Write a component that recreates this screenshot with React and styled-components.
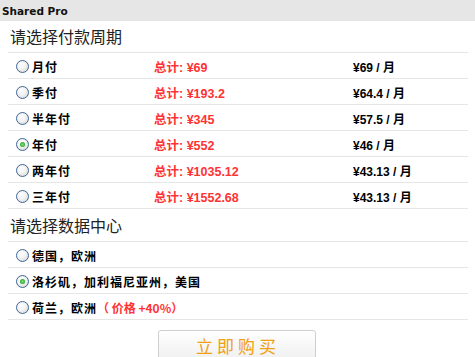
import React, { useState } from "react";
import styled, { createGlobalStyle } from "styled-components";

const Global = createGlobalStyle`
  html, body { margin: 0; padding: 0; background: #fff; }
  body { font-family: "Liberation Sans", Arial, "Noto Sans CJK SC", sans-serif; }
`;

const Header = styled.div`
  height: 21px;
  background: #e6e6e6;
  display: flex;
  align-items: center;
  padding-left: 2px;
  font-family: "DejaVu Sans", Verdana, sans-serif;
  font-weight: bold;
  font-size: 10.5px;
  color: #111;
`;

const Body = styled.div`
  padding: 0 7px 0 8px;
`;

const SectionTitle = styled.div`
  height: ${(p) => p.$h}px;
  line-height: ${(p) => p.$h}px;
  padding-left: 2px;
  font-family: "Noto Sans CJK SC", sans-serif;
  font-size: 16px;
  color: #222;
  border-bottom: 1px solid #e6e6e6;
`;

const Row = styled.label`
  display: grid;
  grid-template-columns: 138px 199px 1fr;
  align-items: center;
  padding-left: 8px;
  padding-top: 2px;
  box-sizing: border-box;
  height: 26px;
  border-bottom: 1px solid #e6e6e6;
  cursor: pointer;
`;

const LabelCell = styled.span`
  display: flex;
  align-items: center;
  gap: 3px;
  grid-column: ${(p) => (p.$wide ? "1 / -1" : "auto")};
`;

const Radio = styled.input.attrs({ type: "radio" })`
  appearance: none;
  -webkit-appearance: none;
  margin: 0;
  width: 13px;
  height: 13px;
  border-radius: 50%;
  border: 1px solid #3d6697;
  box-sizing: border-box;
  background: radial-gradient(circle at 40% 35%, #ffffff 0%, #f2f2f2 45%, #cfcfcf 100%);
  position: relative;
  flex: none;
  &:checked::after {
    content: "";
    position: absolute;
    left: 3px;
    top: 3px;
    width: 5px;
    height: 5px;
    border-radius: 50%;
    background: radial-gradient(circle, #7fe07f 0%, #2fa82f 70%, #1f7a1f 100%);
  }
`;

const Name = styled.span`
  font-family: "Noto Sans CJK SC", sans-serif;
  font-weight: bold;
  font-size: 12px;
  letter-spacing: 1px;
  color: #000;
`;

const Extra = styled.span`
  font-family: "Noto Sans CJK SC", sans-serif;
  font-weight: bold;
  font-size: 12px;
  color: #ff3333;
  margin-left: -3px;
`;

const Total = styled.span`
  font-family: "Liberation Sans", Arial, "Noto Sans CJK SC", sans-serif;
  font-weight: bold;
  font-size: 12.5px;
  color: #ff3333;
`;

const Monthly = styled.span`
  font-family: "Liberation Sans", Arial, "Noto Sans CJK SC", sans-serif;
  font-weight: bold;
  font-size: 12px;
  color: #000;
`;

const ButtonWrap = styled.div`
  display: flex;
  justify-content: center;
  padding-top: 10px;
  padding-right: 2px;
`;

const BuyButton = styled.button`
  width: 158px;
  height: 30px;
  border: 1px solid #cfcfcf;
  border-radius: 3px;
  background: linear-gradient(#ffffff, #f0f0f0);
  box-shadow: inset 0 -1px 0 #e2e2e2;
  font-family: "Noto Sans CJK SC", sans-serif;
  font-size: 17px;
  letter-spacing: 4px;
  padding-left: 8px;
  color: #f0a010;
  cursor: pointer;
`;

const cycles = [
  { name: "月付", total: "总计: ¥69", month: "¥69 / 月" },
  { name: "季付", total: "总计: ¥193.2", month: "¥64.4 / 月" },
  { name: "半年付", total: "总计: ¥345", month: "¥57.5 / 月" },
  { name: "年付", total: "总计: ¥552", month: "¥46 / 月" },
  { name: "两年付", total: "总计: ¥1035.12", month: "¥43.13 / 月" },
  { name: "三年付", total: "总计: ¥1552.68", month: "¥43.13 / 月" },
];

const centers = [
  { name: "德国，欧洲" },
  { name: "洛杉矶，加利福尼亚州，美国" },
  { name: "荷兰，欧洲", extra: "（ 价格 +40%）" },
];

export default function App() {
  const [cycle, setCycle] = useState(3);
  const [dc, setDc] = useState(1);
  return (
    <>
      <Global />
      <Header>Shared Pro</Header>
      <Body>
        <SectionTitle $h={31}>请选择付款周期</SectionTitle>
        {cycles.map((c, i) => (
          <Row key={c.name}>
            <LabelCell>
              <Radio name="cycle" checked={cycle === i} onChange={() => setCycle(i)} />
              <Name>{c.name}</Name>
            </LabelCell>
            <Total>{c.total}</Total>
            <Monthly>{c.month}</Monthly>
          </Row>
        ))}
        <SectionTitle $h={32}>请选择数据中心</SectionTitle>
        {centers.map((c, i) => (
          <Row key={c.name}>
            <LabelCell $wide>
              <Radio name="dc" checked={dc === i} onChange={() => setDc(i)} />
              <Name>{c.name}</Name>
              {c.extra && <Extra>{c.extra}</Extra>}
            </LabelCell>
          </Row>
        ))}
        <ButtonWrap>
          <BuyButton>立即购买</BuyButton>
        </ButtonWrap>
      </Body>
    </>
  );
}
